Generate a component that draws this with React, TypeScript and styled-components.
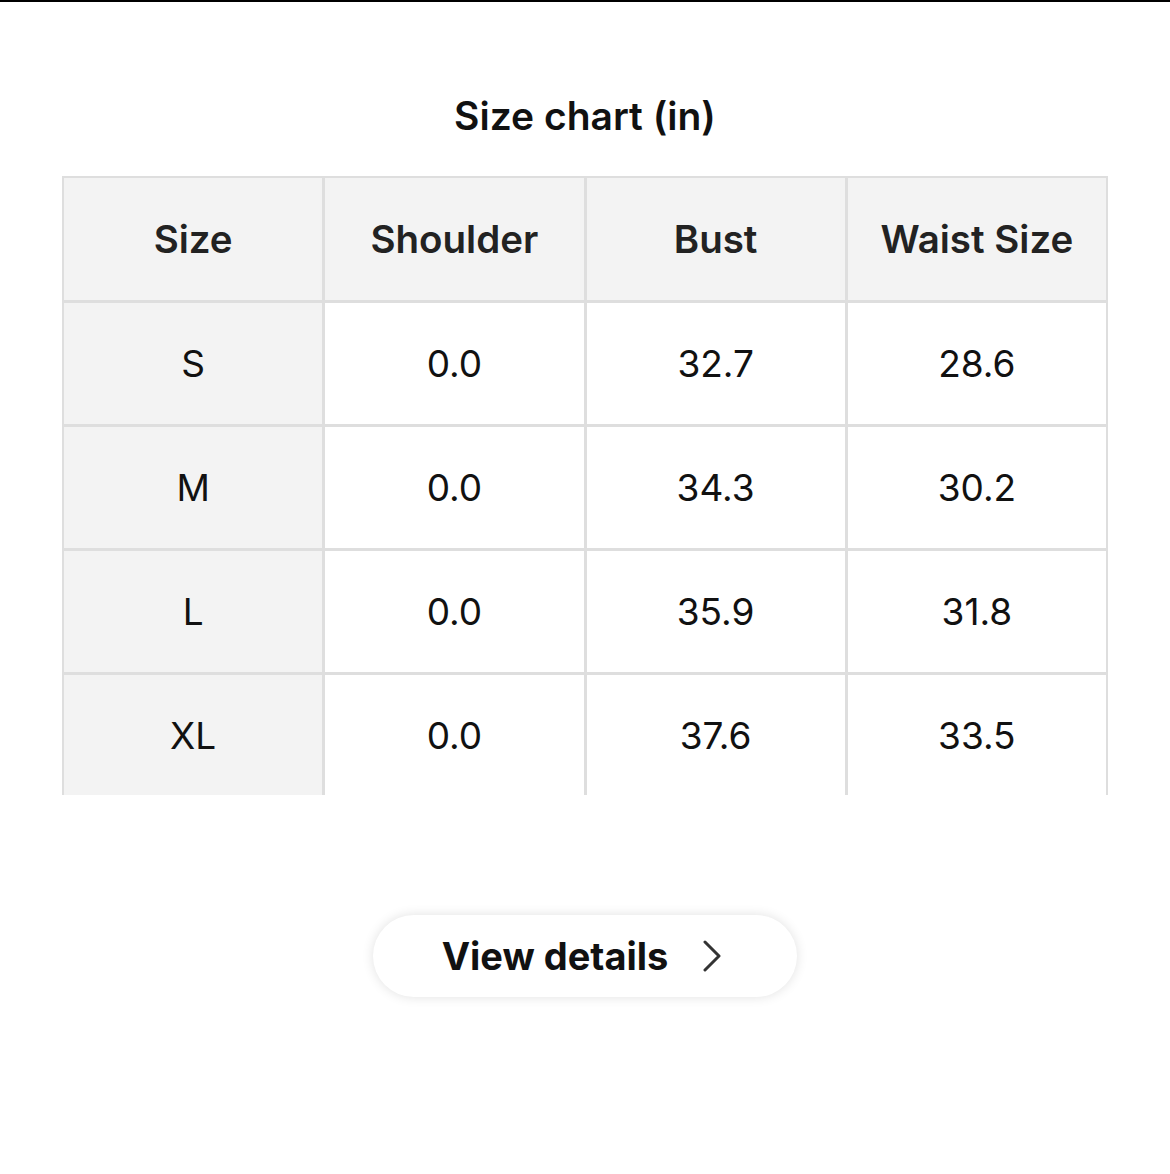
import React from "react";
import styled, { createGlobalStyle } from "styled-components";

const Global = createGlobalStyle`
  html, body { margin: 0; padding: 0; background: #fff; }
  body { font-family: Inter, "Noto Sans", sans-serif; -webkit-font-smoothing: antialiased; }
`;

const Page = styled.div`
  width: 1170px;
  height: 1174px;
  background: #fff;
  border-top: 2px solid #000;
  box-sizing: border-box;
  display: flex;
  flex-direction: column;
  align-items: center;
`;

const Title = styled.h1`
  margin: 90px 0 0;
  height: 48px;
  line-height: 48px;
  font-size: 39px;
  font-weight: 600;
  color: #111;
`;

const Table = styled.div`
  margin-top: 36px;
  width: 1046px;
  box-sizing: border-box;
  display: grid;
  grid-template-columns: repeat(4, 1fr);
  grid-template-rows: 122px 121px 121px 121px 120px;
  gap: 3px;
  padding: 2px 2px 0;
  background: #dedede;
`;

const Cell = styled.div<{ $shade?: boolean; $head?: boolean }>`
  display: flex;
  align-items: center;
  justify-content: center;
  background: ${(p) => (p.$shade ? "#f3f3f3" : "#ffffff")};
  font-size: ${(p) => (p.$head ? "38.5px" : "37px")};
  font-weight: ${(p) => (p.$head ? 600 : 400)};
  color: ${(p) => (p.$head ? "#222" : "#111")};
`;

const Button = styled.button`
  margin-top: 120px;
  width: 424px;
  height: 82px;
  border: none;
  border-radius: 41px;
  background: #fff;
  box-shadow: 0 0 12px rgba(0, 0, 0, 0.12);
  display: flex;
  align-items: center;
  justify-content: center;
  gap: 34px;
  font-family: Inter, "Noto Sans", sans-serif;
  font-size: 38px;
  font-weight: 700;
  color: #111;
  padding: 0 6px 0 0;
  cursor: pointer;
`;

const headers = ["Size", "Shoulder", "Bust", "Waist Size"];
const rows = [
  ["S", "0.0", "32.7", "28.6"],
  ["M", "0.0", "34.3", "30.2"],
  ["L", "0.0", "35.9", "31.8"],
  ["XL", "0.0", "37.6", "33.5"],
];

export default function App() {
  return (
    <>
      <Global />
      <Page>
        <Title>Size chart (in)</Title>
        <Table>
          {headers.map((h) => (
            <Cell key={h} $shade $head>
              {h}
            </Cell>
          ))}
          {rows.map((r) =>
            r.map((v, i) => (
              <Cell key={r[0] + i} $shade={i === 0}>
                {v}
              </Cell>
            ))
          )}
        </Table>
        <Button>
          View details
          <svg width="20" height="32" viewBox="0 0 20 32" fill="none">
            <path d="M3 2 L17 16 L3 30" stroke="#333" strokeWidth="3" strokeLinecap="round" strokeLinejoin="round" />
          </svg>
        </Button>
      </Page>
    </>
  );
}
